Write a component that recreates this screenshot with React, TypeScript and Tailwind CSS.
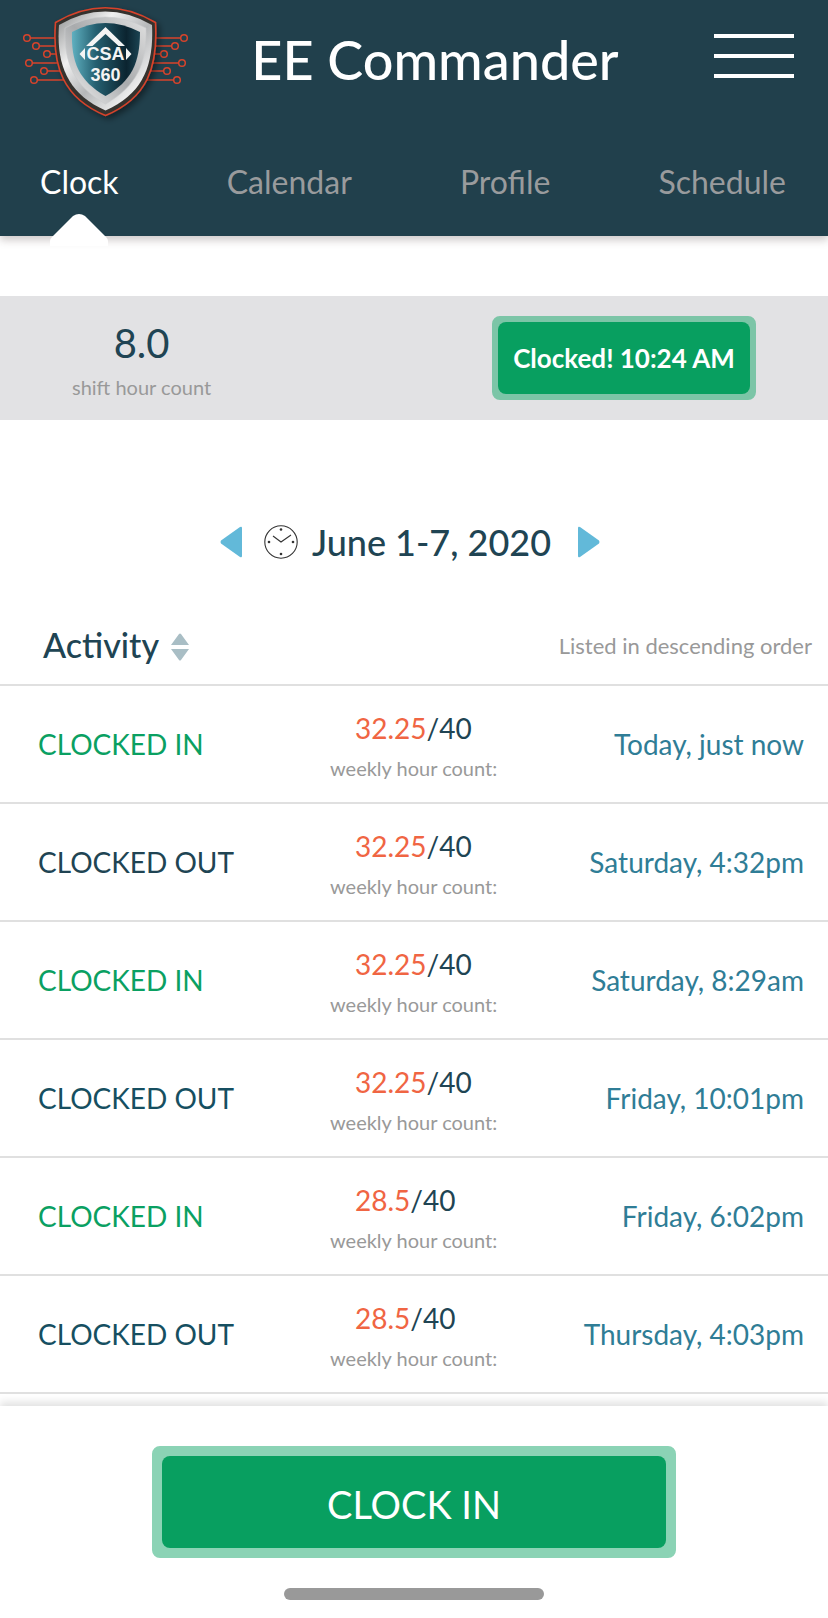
import { useState } from "react";

const tabs = [
  { name: "Clock", padding: "pl-10" },
  { name: "Calendar", padding: "" },
  { name: "Profile", padding: "" },
  { name: "Schedule", padding: "pr-[42px]" },
];

const activity = [
  { type: "in", color: "text-[#0aa062]", hours: "32.25", time: "Today, just now" },
  { type: "out", color: "text-[#204453]", hours: "32.25", time: "Saturday, 4:32pm" },
  { type: "in", color: "text-[#0aa062]", hours: "32.25", time: "Saturday, 8:29am" },
  { type: "out", color: "text-[#164f61]", hours: "32.25", time: "Friday, 10:01pm" },
  { type: "in", color: "text-[#0aa062]", hours: "28.5", time: "Friday, 6:02pm" },
  { type: "out", color: "text-[#164f61]", hours: "28.5", time: "Thursday, 4:03pm" },
];

// y of each circuit line and x of the node at its left end
const circuits = [
  [38, 27],
  [46, 36],
  [54, 47],
  [63, 29],
  [71, 44],
  [80, 34],
];

function Logo() {
  return (
    <svg width="210" height="130" viewBox="0 0 210 130" role="img" aria-label="CSA 360">
      <defs>
        <linearGradient id="steel" x1="0" y1="0" x2="1" y2="1">
          <stop offset="0" stopColor="#8f9192" />
          <stop offset=".3" stopColor="#f0f0f0" />
          <stop offset=".55" stopColor="#b5b7b9" />
          <stop offset=".8" stopColor="#ededed" />
          <stop offset="1" stopColor="#8f9192" />
        </linearGradient>
        <linearGradient id="rim" x1="0" y1="1" x2="1" y2="0">
          <stop offset="0" stopColor="#f5f5f5" />
          <stop offset=".5" stopColor="#a9abad" />
          <stop offset="1" stopColor="#e2e2e2" />
        </linearGradient>
        <linearGradient id="core" x1="0" y1="0" x2="1" y2="0">
          <stop offset="0" stopColor="#5fb0c0" />
          <stop offset=".35" stopColor="#256071" />
          <stop offset=".8" stopColor="#0b2430" />
          <stop offset="1" stopColor="#1b4352" />
        </linearGradient>
        <filter id="drop" x="-20%" y="-20%" width="150%" height="150%">
          <feDropShadow dx="3" dy="3" stdDeviation="3" floodOpacity=".45" />
        </filter>
      </defs>
      <g stroke="#d8432b" strokeWidth="1.5" fill="none">
        {circuits.map(([y, x]) => (
          <g key={y}>
            <path d={`M${x + 3} ${y}H${208 - x}`} />
            <circle cx={x} cy={y} r="3.3" />
            <circle cx={211 - x} cy={y} r="3.3" />
          </g>
        ))}
      </g>
      <path d="M55.500 22.500Q105 -7 155.500 22.500C158 66 148 98 105.500 115.500C63 98 52 66 55.500 22.500Z" fill="#34332f" stroke="#d8432b" strokeWidth="1.600" filter="url(#drop)" />
      <path d="M59 25Q105 -2 152 25C154 65 143 94 105.500 110.500C68 94 56 65 59 25Z" fill="url(#steel)" />
      <path d="M65 28Q105 6 146 28C147 63 137 86 105.500 104C74 86 64 63 65 28Z" fill="url(#rim)" stroke="#c9cbcc" strokeWidth=".6" />
      <path d="M72 32Q105 14 140 32C140 62 132 81 105.500 96C79 81 71 62 72 32Z" fill="url(#core)" />
      {/* roof and side tips around the lettering */}
      <path d="M86 46L105.500 27L125 46H118.500L105.500 34L92.500 46Z" fill="#f4f4f4" />
      <path d="M85 48V60L79.500 54ZM126 48V60L131.500 54Z" fill="#f4f4f4" />
      <g fill="#f4f4f4" textAnchor="middle" className="font-['Liberation_Sans',sans-serif] font-bold">
        <text x="105.5" y="60" fontSize="18">CSA</text>
        <text x="105.5" y="81" fontSize="18">360</text>
      </g>
    </svg>
  );
}

function ClockIcon() {
  return (
    <svg width="34" height="34" viewBox="0 0 34 34" fill="none" stroke="#333" strokeWidth="1.1" aria-hidden="true">
      <circle cx="17" cy="17" r="16.200" />
      <path d="M9 11L17 17L27 10" />
      <g fill="#333" stroke="none">
        <circle cx="17" cy="4.500" r="1.300" />
        <circle cx="29" cy="17" r="1.300" />
        <circle cx="17" cy="29" r="1.300" />
        <circle cx="5" cy="17" r="1.300" />
      </g>
    </svg>
  );
}

function Header() {
  const [active, setActive] = useState("Clock");

  return (
    <header className="bg-[#21404c] shadow-[0_4px_8px_rgba(60,40,40,0.25)]">
      <div className="flex items-start justify-between h-[130px] pr-[34px]">
        <Logo />
        <h1 className="pt-6 mr-[54px] text-[54px] leading-[72px] font-medium text-white">EE Commander</h1>
        <button aria-label="Menu" className="flex flex-col gap-4 w-20 mt-[34px]">
          <span className="w-full h-1 bg-white" />
          <span className="w-full h-1 bg-white" />
          <span className="w-full h-1 bg-white" />
        </button>
      </div>
      <nav className="flex justify-between h-[106px] pt-8">
        {tabs.map((tab) => (
          <div key={tab.name} className={tab.padding}>
            <button
              onClick={() => setActive(tab.name)}
              className={`relative flex justify-center h-[74px] text-[32px] leading-[40px] ${
                active === tab.name ? "text-white" : "text-[#999b9d]"
              }`}
            >
              {tab.name}
              {active === tab.name && (
                <svg className="absolute -bottom-2.5" width="58" height="32" viewBox="0 0 58 32" fill="#fff">
                  <path d="M0 32V27Q0 25 2 23L23 2Q29 -2 35 2L56 23Q58 25 58 27V32Z" />
                </svg>
              )}
            </button>
          </div>
        ))}
      </nav>
    </header>
  );
}

function ShiftBar() {
  return (
    <section className="flex items-center justify-between h-[124px] mt-[60px] px-[72px] bg-[#e2e2e4]">
      <div className="pt-1.5 text-center">
        <p className="text-[40px] leading-[48px] text-[#204453]">8.0</p>
        <p className="pt-1 text-xl leading-8 text-[#999]">shift hour count</p>
      </div>
      <button className="h-[84px] w-[264px] rounded-lg border-6 border-[#7cc5a7] bg-[#7cc5a7]">
        <span className="flex items-center justify-center h-full rounded-lg bg-[#089f60] text-[26px] font-bold text-white">
          Clocked! 10:24 AM
        </span>
      </button>
    </section>
  );
}

function WeekPicker() {
  return (
    <section className="flex items-center justify-center h-11 mt-[100px] pr-2">
      <button aria-label="Previous week">
        <svg width="22" height="32" viewBox="0 0 22 32" fill="#62b9d9">
          <path d="M20 1Q22 0 22 2V30Q22 32 20 31L1 17.500Q0 16 1 14.500Z" />
        </svg>
      </button>
      <span className="pl-[22px] pr-[14px]">
        <ClockIcon />
      </span>
      <h2 className="text-4xl font-medium text-[#204453]">June 1-7, 2020</h2>
      <button aria-label="Next week" className="ml-[27px]">
        <svg width="22" height="32" viewBox="0 0 22 32" fill="#62b9d9">
          <path d="M2 1Q0 0 0 2V30Q0 32 2 31L21 17.500Q22 16 21 14.500Z" />
        </svg>
      </button>
    </section>
  );
}

function ActivityList() {
  return (
    <section className="mt-[52px]">
      <div className="flex items-center justify-between h-[68px] pb-2.5 pl-[43px] pr-4">
        <button className="flex items-center gap-3 text-[34px] leading-[44px] font-medium text-[#204453]">
          Activity
          <svg className="mt-1" width="18" height="28" viewBox="0 0 18 28" fill="#a9bec5" aria-hidden="true">
            <path d="M8 1Q9 0 10 1L18 12H0ZM0 16H18L10 27Q9 28 8 27Z" />
          </svg>
        </button>
        <p className="text-[22px] text-[#999]">Listed in descending order</p>
      </div>
      <ul>
        {activity.map((item) => (
          <li
            key={item.time}
            className="grid grid-cols-[1fr_168px_1fr] items-center h-[118px] px-6 border-t-2 border-[#e0e0e0] last:h-[120px] last:border-b-2"
          >
            <span className={`pl-3.5 text-[28px] ${item.color}`}>{item.type === "in" ? "CLOCKED IN" : "CLOCKED OUT"}</span>
            <div className="pt-2">
              <p className="pl-[25px] text-[28px] leading-[36px] text-[#204453]">
                <span className="text-[#f06543]">{item.hours}</span>/40
              </p>
              <p className="pt-1 text-xl leading-9 text-[#999]">weekly hour count:</p>
            </div>
            <span className="text-right text-[28px] text-[#2f7d96]">{item.time}</span>
          </li>
        ))}
      </ul>
    </section>
  );
}

export default function App() {
  return (
    <main className="flex flex-col min-h-screen bg-white font-['Lato',sans-serif]">
      <Header />
      <ShiftBar />
      <WeekPicker />
      <ActivityList />
      <footer className="flex flex-col items-center grow mt-3 pt-10 pb-4 shadow-[0_-4px_8px_rgba(0,0,0,0.12)]">
        <button className="w-[524px] max-w-full h-28 rounded-lg border-10 border-[#8bd3b5] bg-[#8bd3b5]">
          <span className="flex items-center justify-center h-full pt-1 rounded-lg bg-[#089f60] text-[38px] text-white">
            CLOCK IN
          </span>
        </button>
        <div className="w-[260px] h-3 mt-[30px] rounded-full bg-[#999]" />
      </footer>
    </main>
  );
}
